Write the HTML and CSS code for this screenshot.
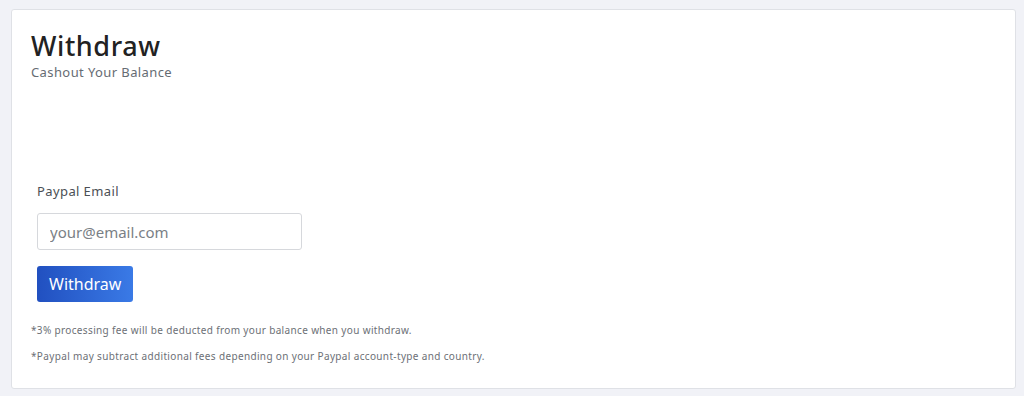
FILE: index.html
```html
<!DOCTYPE html>
<html lang="en">
<head>
  <meta charset="utf-8">
  <title>Withdraw</title>
  <link rel="stylesheet" href="styles.css">
</head>
<body>
  <div class="card">
    <div class="card-header">
      <h1>Withdraw</h1>
      <p class="subtitle">Cashout Your Balance</p>
    </div>
    <form class="withdraw-form">
      <label class="form-label" for="email">Paypal Email</label>
      <input class="form-input" id="email" type="email" placeholder="your@email.com">
      <button class="btn-primary" type="button">Withdraw</button>
    </form>
    <div class="notes">
      <p>*3% processing fee will be deducted from your balance when you withdraw.</p>
      <p>*Paypal may subtract additional fees depending on your Paypal account-type and country.</p>
    </div>
  </div>
</body>
</html>
```

FILE: styles.css
```css
html, body {
  margin: 0;
  height: 100%;
}

body {
  background: #f1f2f7;
  font-family: "Noto Sans", sans-serif;
  color: #333;
  padding: 9px 8px 8px 11px;
  box-sizing: border-box;
}

.card {
  background: #fff;
  border: 1px solid #dfe1e6;
  border-radius: 3px;
  height: 380px;
  box-sizing: border-box;
  padding: 20px 20px 0 19px;
}

.card-header h1 {
  margin: 0;
  font-size: 27px;
  font-weight: 500;
  line-height: 32px;
  letter-spacing: 0.6px;
  color: #222;
}

.subtitle {
  margin: 1px 0 0;
  font-size: 13px;
  letter-spacing: 0.4px;
  color: #666c73;
  line-height: 18px;
}

.withdraw-form {
  display: flex;
  flex-direction: column;
  align-items: flex-start;
  margin: 101px 0 0 6px;
}

.form-label {
  font-size: 13px;
  letter-spacing: 0.4px;
  color: #4b4f55;
  line-height: 18px;
}

.form-input {
  margin-top: 13px;
  width: 265px;
  height: 37px;
  box-sizing: border-box;
  border: 1px solid #d6d8dc;
  border-radius: 3px;
  padding: 0 12px;
  font-family: inherit;
  font-size: 15px;
  color: #333;
}

.form-input::placeholder {
  color: #7a7f86;
}

.btn-primary {
  margin-top: 16px;
  height: 36px;
  padding: 0 12px;
  border: none;
  border-radius: 3px;
  background: linear-gradient(90deg, #2150c0, #3a7ae6);
  color: #fff;
  font-family: inherit;
  font-size: 16px;
}

.notes {
  margin-top: 21px;
}

.notes p {
  margin: 0 0 11px;
  font-size: 10px;
  line-height: 15px;
  letter-spacing: 0.35px;
  color: #6c7076;
}
```
